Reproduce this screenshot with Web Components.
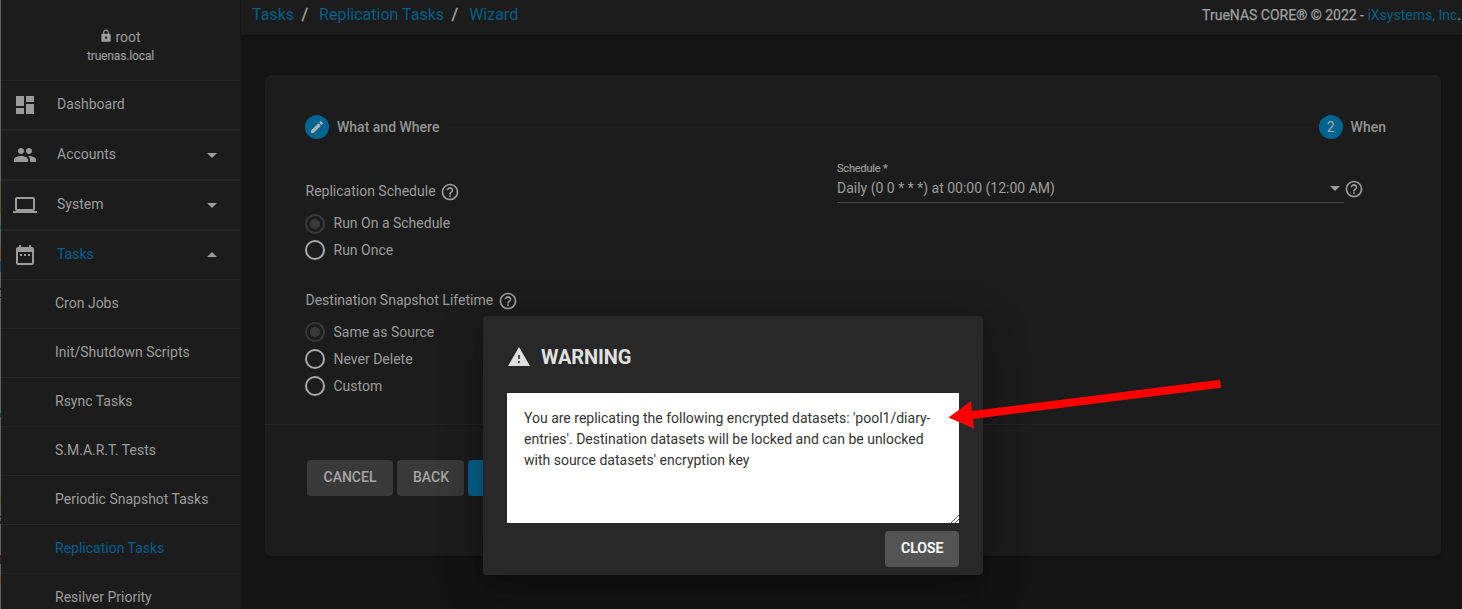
<!DOCTYPE html>
<html lang="en"><head><meta charset="utf-8"><title>TrueNAS - Replication Wizard</title>
<style>
html,body{margin:0;height:100%;overflow:hidden;background:#141414}
body{font:400 14px/20px Roboto,"Liberation Sans",sans-serif;color:#9c9c9c}
</style></head><body>
<nas-app></nas-app>
<script>
const define=(name,css,html)=>customElements.define(name,class extends HTMLElement{
  constructor(){super();const r=this.attachShadow({mode:'open'});
    const t=document.createElement('template');
    t.innerHTML='<style>*{box-sizing:border-box}:host{display:block;box-sizing:border-box}'+css+'</style>'+(typeof html==='function'?html(this):html);
    r.appendChild(t.content.cloneNode(true));}
});
const icons={
 lock:'<path d="M18 8h-1V6c0-2.760-2.240-5-5-5S7 3.240 7 6v2H6c-1.100 0-2 .9-2 2v10c0 1.100.9 2 2 2h12c1.100 0 2-.9 2-2V10c0-1.100-.9-2-2-2zm-6 9c-1.100 0-2-.9-2-2s.9-2 2-2 2 .9 2 2-.9 2-2 2zm3.100-9H8.900V6c0-1.710 1.390-3.100 3.100-3.100s3.100 1.390 3.100 3.100v2z"/>',
 dashboard:'<path d="M3 13h8V3H3v10zm0 8h8v-6H3v6zm10 0h8V11h-8v10zm0-18v6h8V3h-8z"/>',
 people:'<path d="M16 11c1.660 0 2.990-1.340 2.990-3S17.660 5 16 5s-3 1.340-3 3 1.340 3 3 3zm-8 0c1.660 0 2.990-1.340 2.990-3S9.660 5 8 5 5 6.340 5 8s1.340 3 3 3zm0 2c-2.330 0-7 1.170-7 3.500V19h14v-2.500C15 14.170 10.330 13 8 13zm8 0c-.29 0-.62.02-.97.05C16.190 13.890 17 15.020 17 16.500V19h6v-2.500c0-2.330-4.670-3.500-7-3.500z"/>',
 laptop:'<path d="M20 18c1.100 0 1.990-.9 1.990-2L22 6c0-1.100-.9-2-2-2H4c-1.100 0-2 .9-2 2v10c0 1.100.9 2 2 2H0v2h24v-2h-4zM4 6h16v10H4V6z"/>',
 calendar:'<path d="M9 11H7v2h2v-2zm4 0h-2v2h2v-2zm4 0h-2v2h2v-2zm2-7h-1V2h-2v2H8V2H6v2H5c-1.110 0-1.990.9-1.990 2L3 20c0 1.100.89 2 2 2h14c1.100 0 2-.9 2-2V6c0-1.100-.9-2-2-2zm0 16H5V9h14v11z"/>',
 down:'<path d="M7 10l5 5 5-5z"/>',
 up:'<path d="M7 14l5-5 5 5z"/>',
 edit:'<path d="M3 17.250V21h3.750L17.810 9.940l-3.750-3.750L3 17.250zM20.710 7.040c.39-.39.39-1.020 0-1.410l-2.340-2.340c-.39-.39-1.020-.39-1.410 0l-1.830 1.830 3.750 3.750 1.830-1.830z"/>',
 help:'<path d="M11 18h2v-2h-2v2zm1-16C6.480 2 2 6.480 2 12s4.480 10 10 10 10-4.480 10-10S17.520 2 12 2zm0 18c-4.410 0-8-3.590-8-8s3.590-8 8-8 8 3.590 8 8-3.590 8-8 8zm0-14c-2.210 0-4 1.790-4 4h2c0-1.100.9-2 2-2s2 .9 2 2c0 2-3 1.750-3 5h2c0-2.250 3-2.500 3-5 0-2.210-1.790-4-4-4z"/>',
 warning:'<path d="M1 21h22L12 2 1 21z"/><path fill="#555" d="M13 18h-2v-2h2v2zm0-4h-2v-4h2v4z"/>'
};
define('nas-icon',':host{width:24px;height:24px;flex:none}svg{display:block;width:100%;height:100%;fill:currentColor}',
 e=>`<svg viewBox="0 0 24 24">${icons[e.getAttribute('name')]}</svg>`);
define('nas-nav-item',`:host{height:50px;display:flex;align-items:center;border-top:1px solid #262626;border-bottom:1px solid #262626;padding:0 16px 0 12px}
 nas-icon{margin-bottom:1px}.t{margin-left:20px;flex:1;padding-bottom:2px}:host([active]) .t{color:#045f92}:host([active]){border-bottom:0;height:49px}`,
 e=>`<nas-icon name="${e.getAttribute('icon')}"></nas-icon><span class="t"><slot></slot></span>${e.hasAttribute('arrow')?`<nas-icon name="${e.getAttribute('arrow')}"></nas-icon>`:''}`);
define('nas-nav-sub',`:host{height:49px;border-top:1px solid #262626;padding:13px 0 0 54px;white-space:nowrap}:host([active]){color:#045f92}`,'<slot></slot>');
define('nas-sidebar',`:host{width:241px;height:609px;overflow:hidden;display:flex;background:#1c1c1c;border-right:1px solid #171717}
 .edge{width:1px;flex:none;background:linear-gradient(#626262 182px,#5c5a30 182px 213px,#626262 213px 225px,#2f5a6a 225px 229px,#626262 229px 246px,#6a5a38 246px 261px,#1d4a66 261px 272px,#626262 272px 288px,#222 288px 290px,#626262 290px 297px,#222 297px 298px,#626262 298px 413px,#1d4a5e 413px 417px,#626262 417px 495px,#5c5c3a 495px 505px,#626262 505px 516px,#222 516px 517px,#626262 517px 521px,#222 521px 524px,#626262 524px 555px,#402030 555px 564px,#626262 564px 576px,#72502e 576px 584px,#626262 584px)}
 nav{flex:1;min-width:0}
 .p{height:80px;text-align:center;padding-top:27px}.u{display:flex;justify-content:center;align-items:center;gap:4px;height:20px}.u nas-icon{width:14px;height:14px;margin:-3px -1.500px 0}.h{font-size:12px;line-height:18px;letter-spacing:-.14px;-webkit-text-stroke:.15px}`,
 `<div class="edge"></div><nav><div class="p"><div class="u"><nas-icon name="lock"></nas-icon><span>root</span></div><div class="h">truenas.local</div></div>
 <nas-nav-item icon="dashboard">Dashboard</nas-nav-item><nas-nav-item icon="people" arrow="down">Accounts</nas-nav-item><nas-nav-item icon="laptop" arrow="down">System</nas-nav-item><nas-nav-item icon="calendar" arrow="up" active>Tasks</nas-nav-item>
 <nas-nav-sub>Cron Jobs</nas-nav-sub><nas-nav-sub>Init/Shutdown Scripts</nas-nav-sub><nas-nav-sub>Rsync Tasks</nas-nav-sub><nas-nav-sub>S.M.A.R.T. Tests</nas-nav-sub><nas-nav-sub>Periodic Snapshot Tasks</nas-nav-sub><nas-nav-sub active>Replication Tasks</nas-nav-sub><nas-nav-sub>Resilver Priority</nas-nav-sub></nav>`);
define('nas-topbar',`:host{height:35px;background:#1c1c1c;display:flex;justify-content:space-between;padding:5px 1px 0 11px;box-shadow:0 1px 1px #101010;white-space:nowrap}
 .b{font-size:16px}a{color:#025f86}.s{margin:0 11px 0 7.500px;color:#aaa;-webkit-text-stroke:.3px}.c{color:#a0a0a0;-webkit-text-stroke:.25px}.c a{-webkit-text-stroke:0}`,
 `<div class="b"><a>Tasks</a><span class="s">/</span><a>Replication Tasks</a><span class="s">/</span><a>Wizard</a></div><div class="c">TrueNAS CORE® © 2022 - <a>iXsystems, Inc</a>.</div>`);
define('nas-step',`:host{display:flex;align-items:center;gap:8px;font-weight:500;color:#949494;height:24px}
 .c{width:24px;height:24px;border-radius:50%;background:#006492;display:grid;place-items:center;font-weight:400;color:#aaa}nas-icon{width:16px;height:16px;color:#b0b0b0}`,
 e=>`<div class="c">${e.hasAttribute('edit')?'<nas-icon name="edit"></nas-icon>':e.getAttribute('number')}</div><span><slot></slot></span>`);
define('nas-legend',`:host{display:flex;align-items:center;gap:5px;height:20px;padding-left:.5px}nas-icon{width:20px;height:20px;margin:2px 0 0 -.5px}`,'<span><slot></slot></span><nas-icon name="help"></nas-icon>');
define('nas-radio',`:host{display:flex;align-items:center;gap:8.500px;height:27px}
 i{width:20px;height:20px;border:2px solid #a9a9a9;border-radius:50%;margin-top:1px}
 :host([checked]) i{border-color:#3a3a3a;background:radial-gradient(circle,#3a3a3a 4.700px,transparent 5.300px)}`,'<i></i><span><slot></slot></span>');
define('nas-select',`:host{width:507px;border-bottom:1px solid #494949;height:41px}.l{font-size:11px;line-height:12px;height:16px;padding-top:1px;letter-spacing:-.2px;-webkit-text-stroke:.2px}.v{display:flex;justify-content:space-between;height:20px}nas-icon{margin:-2px -3px 0}`,
 '<div class="l">Schedule *</div><div class="v"><span><slot></slot></span><nas-icon name="down"></nas-icon></div>');
define('nas-button',`:host{height:36px;border-radius:4px;background:#393939;padding:0 16px;line-height:35px;font-weight:500;color:#a6a6a6;text-align:center;flex:none}:host([primary]){background:#00608c}:host([bright]){background:#545454;color:#fff;-webkit-text-stroke:.2px}`,'<slot></slot>');
define('nas-wizard',`:host{margin:40px 21px 0 24px;height:481px;border-radius:6px;background:#1c1c1c;padding:40px 0 0;box-shadow:0 1px 2px #101010}
 .steps{display:flex;align-items:center;padding:0 55px 0 40px}.line{flex:1;height:1px;background:#1f1f1f;margin:0 8px}
 .f{display:grid;grid-template-columns:532px 1fr;height:286px;padding:42px 0 0 40px;border-bottom:1px solid #242424}
 .g1{margin:9px 0 27px}.g1 nas-radio:first-child{height:26px}.g2{margin-top:8px}.r{display:flex;margin-top:-19px}.r>nas-icon{width:20px;height:20px;margin:17px 0 0 -.5px}
 .a{display:flex;gap:4px;padding:35px 42px}`,
 `<div class="steps"><nas-step edit>What and Where</nas-step><div class="line"></div><nas-step number="2">When</nas-step></div>
 <div class="f"><div><nas-legend>Replication Schedule</nas-legend><div class="g1"><nas-radio checked>Run On a Schedule</nas-radio><nas-radio>Run Once</nas-radio></div>
 <nas-legend>Destination Snapshot Lifetime</nas-legend><div class="g2"><nas-radio checked>Same as Source</nas-radio><nas-radio>Never Delete</nas-radio><nas-radio>Custom</nas-radio></div></div>
 <div class="r"><nas-select>Daily (0 0 * * *) at 00:00 (12:00 AM)</nas-select><nas-icon name="help"></nas-icon></div></div>
 <div class="a"><nas-button style="width:86px">CANCEL</nas-button><nas-button style="width:67px">BACK</nas-button><nas-button primary style="width:80px"></nas-button></div>`);
define('nas-dialog',`:host{position:absolute;left:483px;top:316px;width:500px;height:259px;background:#282828;border-radius:4px;padding:24px;box-shadow:0 11px 15px -7px #0003,0 24px 38px 3px #00000024,0 9px 46px 8px #0000001f}
 h1{margin:0;display:flex;align-items:center;gap:10px;height:33px;font-size:20px;font-weight:700;color:#e0e0e0;letter-spacing:-.1px}
 .m{margin-top:20px;height:130px;background:#fff;color:#333;padding:15px 17px;line-height:21px;white-space:nowrap;position:relative}
 .m svg{position:absolute;right:0;bottom:0;stroke:#555;fill:none}.a{display:flex;justify-content:flex-end;margin-top:8px}`,
 `<h1><nas-icon name="warning"></nas-icon><span>WARNING</span></h1>
 <div class="m"><div>You are replicating the following encrypted datasets: 'pool1/diary-</div><div>entries'. Destination datasets will be locked and can be unlocked</div><div>with source datasets' encryption key</div><svg width="9" height="9"><path d="M1 9L9 1M5 9L9 5"/></svg></div>
 <div class="a"><nas-button bright style="width:74px">CLOSE</nas-button></div>`);
define('nas-arrow',':host{position:absolute;left:940px;top:370px;width:290px;height:70px}svg{display:block;fill:#f00}',
 '<svg width="290" height="70"><path d="M8.500 47.500L31 31L32 41L280 9.800L281 17.800L33 49L34 58.500Z"/></svg>');
define('nas-app',`:host{display:flex;height:609px;position:relative;overflow:hidden}main{flex:1;min-width:0}`,
 '<nas-sidebar></nas-sidebar><main><nas-topbar></nas-topbar><nas-wizard></nas-wizard></main><nas-dialog></nas-dialog><nas-arrow></nas-arrow>');
</script></body></html>
